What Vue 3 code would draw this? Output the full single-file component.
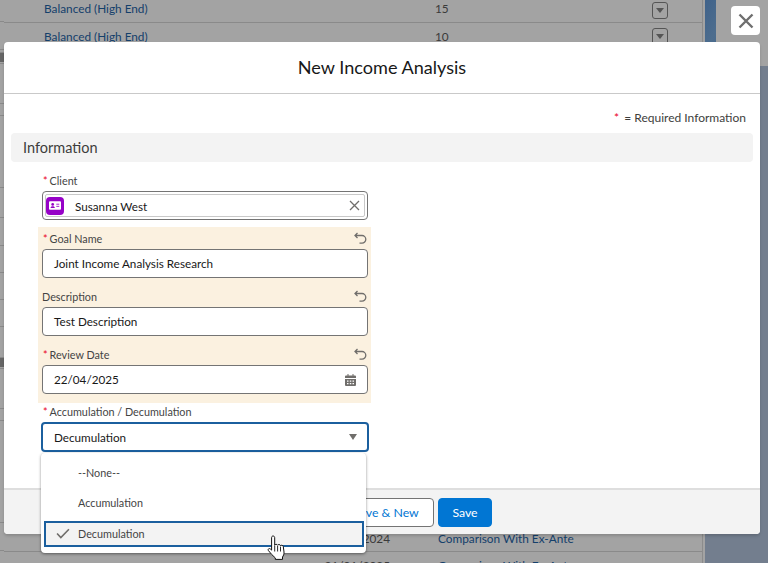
<script setup>
const sideLines = [
  { h: 22 }, { h: 28 }, { h: 3 }, { h: 9, dark: true }, { h: 2 }, { h: 40 }, { h: 12 }, { h: 72 }, { h: 30 }, { h: 28 },
  { h: 27 }, { h: 27 }, { h: 27 }, { h: 31 }, { h: 9, dark: true }, { h: 2 }, { h: 40 }, { h: 12 }, { h: 102 }, { h: 28 }, { h: 28 }
]
const options = [
  { label: '--None--' },
  { label: 'Accumulation' },
  { label: 'Decumulation', selected: true }
]
</script>

<template>
  <div class="page">
    <div class="backdrop">
      <div class="table">
        <div class="edge">
          <div
            v-for="(line, i) in sideLines"
            :key="i"
            class="edge-row"
            :class="{ dark: line.dark }"
            :style="{ height: line.h + 'px' }"
          ></div>
        </div>
        <div class="table-main">
          <div class="top-rows">
            <div class="row first">
              <span class="link top-link">Balanced (High End)</span>
              <span class="num">15</span>
              <span class="menu"><i></i></span>
            </div>
            <div class="row">
              <span class="link top-link">Balanced (High End)</span>
              <span class="num">10</span>
              <span class="menu"><i></i></span>
            </div>
          </div>
          <div class="bottom-rows">
            <div class="row low">
              <span class="date">2024</span>
              <span class="link">Comparison With Ex-Ante</span>
            </div>
            <div class="row low">
              <span class="date">31/01/2025</span>
              <span class="link">Comparison With Ex-Ante</span>
            </div>
          </div>
        </div>
      </div>
      <div class="side">
        <div class="side-top">
          <div class="blue"></div>
        </div>
        <div class="side-bottom"></div>
      </div>
    </div>

    <button class="close" aria-label="Close">
      <svg width="16" height="16" viewBox="0 0 16 16"><path d="M1.5 1.5l13 13M14.500 1.500l-13 13" stroke="#6f6f6f" stroke-width="2.400" fill="none" /></svg>
    </button>

    <div class="modal">
      <header class="modal-head">New Income Analysis</header>
      <div class="modal-body">
        <p class="required"><span class="star">*</span> = Required Information</p>
        <h2 class="section">Information</h2>
        <div class="form">
          <div class="field">
            <label class="label"><span class="star">*</span>Client</label>
            <div class="lookup">
              <div class="lookup-inner">
                <span class="avatar">
                  <svg width="12" height="9" viewBox="0 0 14 10">
                    <rect x="0" y="0" width="14" height="10" rx="1.200" fill="#fff" />
                    <circle cx="4.300" cy="3.700" r="1.600" fill="#9602c7" />
                    <path d="M1.800 8c0-1.500 1-2.200 2.500-2.200S6.800 6.500 6.800 8z" fill="#9602c7" />
                    <path d="M8.500 3.500h3.500M8.500 6h3.500" stroke="#9602c7" stroke-width="1" />
                  </svg>
                </span>
                <span class="lookup-name">Susanna West</span>
                <svg class="clear" width="11" height="11" viewBox="0 0 11 11"><path d="M1 1l9 9M10 1l-9 9" stroke="#706e6b" stroke-width="1.300" fill="none" /></svg>
              </div>
            </div>
          </div>

          <div class="changed">
            <div class="field">
              <label class="label"><span class="star">*</span>Goal Name
                <svg class="undo" width="13" height="13" viewBox="0 0 13 13"><path d="M3.500 1L1 3.500 3.500 6M1.500 3.500h6.500a3.800 3.800 0 0 1 0 7.600H5.500" stroke="#706e6b" stroke-width="1.300" fill="none" /></svg>
              </label>
              <div class="input">Joint Income Analysis Research</div>
            </div>
            <div class="field">
              <label class="label plain">Description
                <svg class="undo" width="13" height="13" viewBox="0 0 13 13"><path d="M3.500 1L1 3.500 3.500 6M1.500 3.500h6.500a3.800 3.800 0 0 1 0 7.600H5.500" stroke="#706e6b" stroke-width="1.300" fill="none" /></svg>
              </label>
              <div class="input">Test Description</div>
            </div>
            <div class="field">
              <label class="label"><span class="star">*</span>Review Date
                <svg class="undo" width="13" height="13" viewBox="0 0 13 13"><path d="M3.500 1L1 3.500 3.500 6M1.500 3.500h6.500a3.800 3.800 0 0 1 0 7.600H5.500" stroke="#706e6b" stroke-width="1.300" fill="none" /></svg>
              </label>
              <div class="input with-icon">22/04/2025
                <svg width="11" height="12" viewBox="0 0 11 12">
                  <path d="M2.500 0h1v1.500h4V0h1v1.500h1.500a1 1 0 0 1 1 1V4H0V2.500a1 1 0 0 1 1-1h1.500z" fill="#706e6b" />
                  <path fill-rule="evenodd" d="M0 5h11v6a1 1 0 0 1-1 1H1a1 1 0 0 1-1-1zM2 6.500v1.200h1.500V6.500zM4.800 6.500v1.200h1.500V6.500zM7.500 6.500v1.200H9V6.500zM2 9v1.200h1.500V9zM4.800 9v1.200h1.500V9zM7.500 9v1.200H9V9z" fill="#706e6b" />
                </svg>
              </div>
            </div>
          </div>

          <div class="field last">
            <label class="label"><span class="star">*</span>Accumulation / Decumulation</label>
            <div class="select">Decumulation<i class="caret"></i></div>
          </div>
        </div>
      </div>
      <footer class="modal-foot">
        <button class="btn">Save &amp; New</button>
        <button class="btn primary">Save</button>
      </footer>
    </div>

    <ul class="dropdown">
      <li v-for="o in options" :key="o.label" class="option" :class="{ selected: o.selected }">
        <svg v-if="o.selected" class="check" width="14" height="11" viewBox="0 0 13 10"><path d="M1 5l3.500 3.800L12 1" stroke="#706e6b" stroke-width="1.500" fill="none" /></svg>
        {{ o.label }}
      </li>
    </ul>

    <svg class="cursor" width="19" height="25" viewBox="0 0 19 25">
      <path d="M6 1c1 0 1.700.7 1.700 1.700v7.500c.2-1.100 2.600-1.300 2.900.1.400-1.100 2.600-1.100 2.900.4.600-.8 2.600-.6 2.800.9l.7 5.400c.2 2.100-.6 3.700-1.500 5v2.400H8.300v-1.500C6 20.900 3.200 18.100 1.300 15.400c-.7-1.300.9-2.500 2.100-1.400l1.200 1.100V2.700C4.600 1.700 5.100 1 6 1z" fill="#fff" stroke="#111" stroke-width="1" stroke-linejoin="round" />
      <path d="M7.700 10.500v6M10.600 11v5.500M13.500 11.700v4.800" stroke="#111" stroke-width=".9" fill="none" />
    </svg>
  </div>
</template>

<style>
html, body { margin: 0; background: #a3a3a3; }
</style>

<style scoped>
.page {
  position: relative;
  width: 768px;
  height: 563px;
  overflow: hidden;
  font-family: Lato, "Noto Sans", sans-serif;
  color: #181818;
}
.backdrop { display: flex; width: 768px; height: 563px; background: #a3a3a3; }
.table { display: flex; width: 702px; border-right: 1px solid #8c8c8c; }
.edge { width: 4px; flex: none; background: #a3a3a3; }
.edge-row { border-bottom: 1px solid #8a8a8a; box-sizing: border-box; }
.edge-row.dark { background: #666; border: 0; }
.table-main { flex: 1; display: flex; flex-direction: column; justify-content: space-between; font-size: 11.800px; color: #3a3a3a; }
.row { display: flex; align-items: center; height: 28px; border-bottom: 1px solid #8a8a8a; box-sizing: border-box; }
.row.first { height: 23px; padding-bottom: 5px; }
.row.first .menu { margin-top: 4px; }
.link { color: #14406b; }
.top-link { margin-left: 40px; width: 391px; }
.num { width: 217px; }
.menu { width: 16px; height: 17px; border: 1px solid #555; border-radius: 3px; box-sizing: border-box; display: flex; align-items: center; justify-content: center; }
.menu i { border: 4px solid transparent; border-top: 5px solid #555; border-bottom: 0; }
.bottom-rows { height: 38px; flex: none; overflow: hidden; }
.bottom-rows .row { height: 27px; }
.date { width: 386px; text-align: right; margin-right: 48px; }
.side { flex: 1; display: flex; flex-direction: column; padding-left: 2px; }
.side-top { height: 66px; background: #a3a3a3; }
.blue { width: 11px; height: 66px; background: linear-gradient(115deg, #3f628a, #4d6d8e 60%, #436689); }
.side-bottom { flex: 1; background: #737e8e; }

.close {
  position: absolute;
  left: 731px;
  top: 6px;
  width: 29px;
  height: 29px;
  border: 0;
  border-radius: 4px;
  background: #fff;
  padding: 0;
  display: flex;
  align-items: center;
  justify-content: center;
}
.modal {
  position: absolute;
  left: 4px;
  top: 42px;
  width: 756px;
  height: 492px;
  background: #fff;
  border-radius: 4px;
  display: flex;
  flex-direction: column;
  box-shadow: 0 2px 3px rgba(0,0,0,.16);
}
.modal-head {
  height: 52px;
  flex: none;
  box-sizing: border-box;
  border-bottom: 1px solid #c9c9c9;
  text-align: center;
  line-height: 51px;
  font-size: 18.100px;
  color: #181818;
}
.modal-body { flex: 1; padding: 0 7px; }
.required { margin: 0; height: 39px; box-sizing: border-box; padding: 15px 7px 0 0; text-align: right; font-size: 12px; line-height: 18px; color: #3e3e3c; }
.star { color: #ea001e; margin-right: 2px; }
.required .star { margin-right: 2px; }
.section { margin: 0; height: 29px; background: #f3f3f3; border-radius: 4px; padding-left: 12px; font-size: 14.500px; font-weight: 400; line-height: 30px; color: #3e3e3c; }
.form { width: 326px; margin-left: 31px; padding-top: 11px; }
.field { padding-bottom: 11px; }
.label { display: flex; align-items: center; height: 18px; box-sizing: border-box; padding: 0 0 4px 1px; font-size: 10.800px; color: #444; position: relative; }
.label.plain { padding-left: 0; }
.undo { position: absolute; right: 1px; top: 1px; }
.lookup { height: 29px; border: 1px solid #747474; border-radius: 4px; box-sizing: border-box; padding: 2px; margin-bottom: -3px; }
.lookup-inner { height: 100%; display: flex; align-items: center; border: 1px solid #c9c9c9; border-radius: 2px; box-sizing: border-box; font-size: 11.700px; padding-right: 4px; }
.avatar { width: 18px; height: 18px; background: #9602c7; border-radius: 4px; display: flex; align-items: center; justify-content: center; flex: none; }
.lookup-name { flex: 1; margin-left: 11px; }
.changed { background: #fbf1e0; margin: -1px -3px 1px -4px; padding: 4px 3px 0 4px; height: 176px; box-sizing: border-box; }
.input { height: 29px; border: 1px solid #747474; border-radius: 4px; background: #fff; box-sizing: border-box; padding: 0 11px; line-height: 27px; font-size: 11.700px; }
.with-icon { display: flex; align-items: center; justify-content: space-between; }
.select { height: 30px; box-sizing: border-box; margin: 0 -1px; border: 2px solid #1b5f9e; border-radius: 4px; background: #fff; padding: 0 11px; line-height: 26px; font-size: 11.700px; display: flex; justify-content: space-between; align-items: center; }
.caret { border: 4px solid transparent; border-width: 6px 4px 0; border-top-color: #706e6b; margin-right: -1px; }
.modal-foot {
  height: 46px;
  flex: none;
  box-sizing: border-box;
  border-top: 2px solid #dedede;
  background: #f3f3f3;
  border-radius: 0 0 4px 4px;
  padding: 8px 268px 0 0;
  display: flex;
  justify-content: flex-end;
  gap: 4px;
}
.btn { height: 29px; box-sizing: border-box; border: 1px solid #747474; border-radius: 4px; background: #fff; color: #0176d3; font: 12.300px Lato, sans-serif; width: 96px; padding: 0; }
.btn.primary { background: #0176d3; color: #fff; border-color: #0176d3; width: 54px; }

.dropdown {
  position: absolute;
  left: 41px;
  top: 453px;
  width: 325px;
  height: 100px;
  margin: 0;
  padding: 5px 2px 0 3px;
  box-sizing: border-box;
  list-style: none;
  background: #fff;
  border-radius: 4px;
  box-shadow: 0 1px 3px rgba(0,0,0,.45);
  font-size: 10.800px;
  color: #444;
}
.option { height: 30px; padding: 0 0 1px 34px; display: flex; align-items: center; box-sizing: border-box; position: relative; }
.option.selected { height: 26px; margin-top: 3px; background: #f3f3f3; border: 2px solid #1b5f9e; padding: 0 0 1px 32px; }
.check { position: absolute; left: 10px; top: 5px; }
.cursor { position: absolute; left: 267px; top: 535px; }
</style>
